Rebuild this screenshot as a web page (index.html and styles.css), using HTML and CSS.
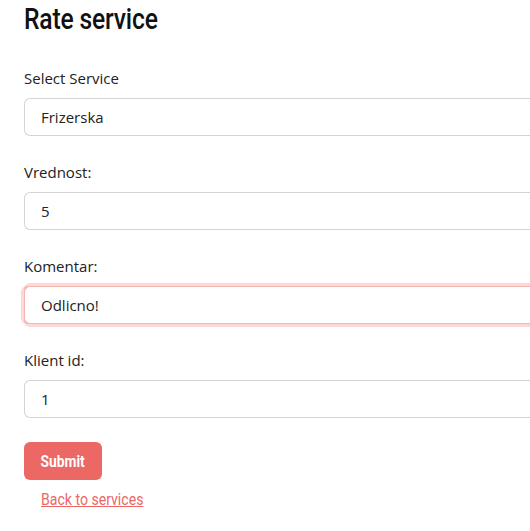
FILE: index.html
```html
<!DOCTYPE html>
<html>
<head>
<meta charset="utf-8">
<link rel="stylesheet" href="styles.css">
</head>
<body>
<div class="page">
  <h1 class="title"><span class="narrow">Rate service</span></h1>
  <form class="form">
    <div class="group">
      <label class="label">Select Service</label>
      <div class="control">Frizerska</div>
    </div>
    <div class="group">
      <label class="label">Vrednost:</label>
      <div class="control">5</div>
    </div>
    <div class="group">
      <label class="label">Komentar:</label>
      <div class="control focus">Odlicno!</div>
    </div>
    <div class="group">
      <label class="label">Klient id:</label>
      <div class="control">1</div>
    </div>
    <div class="actions">
      <span class="btn"><span class="btn-text">Submit</span></span>
      <a class="back" href="#"><span class="back-text">Back to services</span></a>
    </div>
  </form>
</div>
</body>
</html>
```
FILE: styles.css
```css
html, body {
  margin: 0;
  padding: 0;
  background: #fff;
}
body {
  font-family: "Open Sans", "Noto Sans", sans-serif;
  font-size: 15px;
  color: #222;
  overflow: hidden;
}
.page {
  padding: 0 0 0 24px;
}
.title {
  margin: 0 0 30px 0;
  font-family: Roboto, "Liberation Sans", sans-serif;
  font-weight: 500;
  font-size: 29px;
  line-height: 38px;
  height: 36px;
  color: #111;
}
.narrow {
  display: inline-block;
  transform: scaleX(0.85);
  transform-origin: left center;
  letter-spacing: -0.2px;
}
.form {
  display: flex;
  flex-direction: column;
  gap: 24px;
}
.group {
  display: flex;
  flex-direction: column;
  gap: 8px;
}
.label {
  line-height: 24px;
  height: 24px;
  color: #222;
}
.control {
  box-sizing: border-box;
  width: 506px;
  height: 38px;
  border: 1px solid #d4d4d4;
  border-right: none;
  border-radius: 6px 0 0 6px;
  padding: 0 16px;
  line-height: 36px;
  background: #fff;
  color: #222;
}
.control.focus {
  border-color: #f5b4b2;
  box-shadow: -3px 0 0 0 rgba(235, 104, 100, 0.25), 0 3px 0 0 rgba(235, 104, 100, 0.25), 0 -3px 0 0 rgba(235, 104, 100, 0.25);
}
.actions {
  display: flex;
  flex-direction: column;
  align-items: flex-start;
}
.btn {
  box-sizing: border-box;
  height: 38px;
  width: 78px;
  display: flex;
  align-items: center;
  justify-content: center;
  background: #eb6864;
  color: #fff;
  border-radius: 6px;
  font-family: Roboto, "Liberation Sans", sans-serif;
  font-weight: 700;
  font-size: 16px;
}
.btn-text {
  display: inline-block;
  transform: scaleX(0.86);
}
.back {
  margin: 8px 0 0 17px;
  line-height: 24px;
  color: #eb6864;
  text-decoration: none;
  font-family: Roboto, "Liberation Sans", sans-serif;
  font-size: 16px;
}
.back-text {
  display: inline-block;
  text-decoration: underline;
  transform: scaleX(0.88);
  transform-origin: left center;
}
```
